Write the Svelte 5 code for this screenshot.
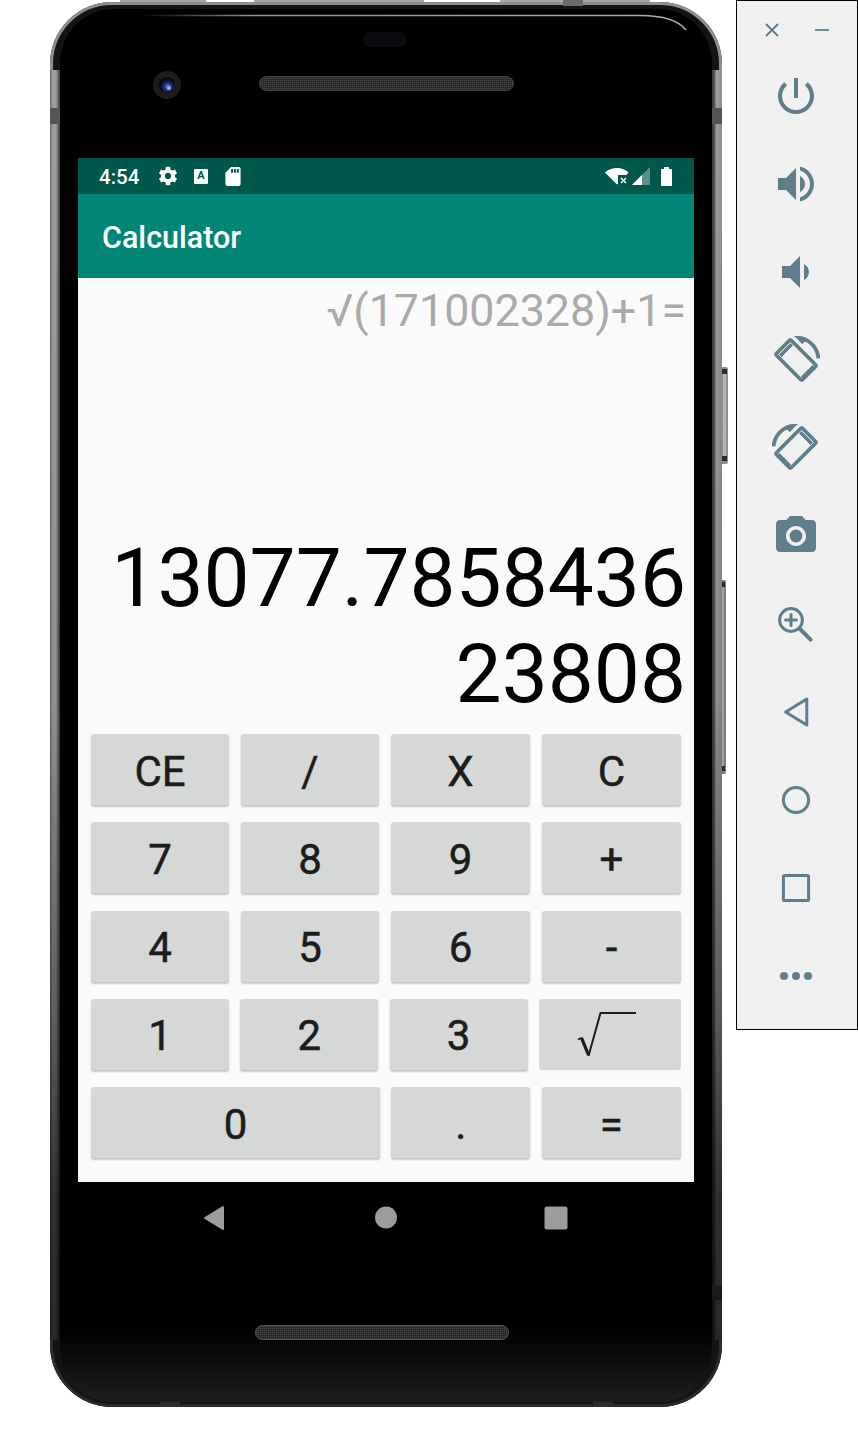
<script>
  const rows = [
    [['CE'], ['/'], ['X'], ['C']],
    [['7'], ['8'], ['9'], ['+']],
    [['4'], ['5'], ['6'], ['-']],
  ];
  const topIcons = [
    'M13 3h-2v10h2V3zm4.83 2.17l-1.42 1.42C17.99 7.86 19 9.81 19 12c0 3.87-3.13 7-7 7s-7-3.13-7-7c0-2.19 1.01-4.14 2.58-5.42L6.17 5.17C4.23 6.82 3 9.26 3 12c0 4.97 4.03 9 9 9s9-4.03 9-9c0-2.74-1.23-5.18-3.17-6.83z',
    'M3 9v6h4l5 5V4L7 9H3zm13.5 3c0-1.77-1.02-3.29-2.5-4.03v8.05c1.48-.73 2.5-2.25 2.5-4.02zM14 3.23v2.06c2.89.86 5 3.54 5 6.71s-2.11 5.85-5 6.71v2.06c4.01-.91 7-4.49 7-8.77s-2.99-7.86-7-8.77z',
    'M18.5 12c0-1.77-1.02-3.29-2.5-4.03v8.05c1.48-.73 2.5-2.25 2.5-4.02zM5 9v6h4l5 5V4L9 9H5z',
  ];
  const rotate = 'M16.48 2.52c3.27 1.55 5.61 4.72 5.97 8.48h1.5C23.44 4.84 18.29 0 12 0l-.66.03 3.81 3.81 1.33-1.32zm-6.25-.77c-.59-.59-1.54-.59-2.12 0L1.75 8.11c-.59.59-.59 1.54 0 2.12l12.02 12.02c.59.59 1.54.59 2.12 0l6.36-6.36c.59-.59.59-1.54 0-2.12L10.23 1.75zm4.6 19.44L2.81 9.17l6.36-6.36 12.02 12.02-6.36 6.36zM9.3 3.7L3.7 9.300l1 1 5.600-5.600zM20.300 14.700l-5.600 5.600 1 1 5.600-5.600z';
</script>

<div class="stage">
  <svg class="device" width="858" height="1440" viewBox="0 0 858 1440" aria-hidden="true">
    <defs>
      <linearGradient id="rim" gradientUnits="userSpaceOnUse" x1="0" y1="0" x2="0" y2="1407">
        <stop offset="0" stop-color="#8f8f8f" />
        <stop offset="0.5" stop-color="#808080" />
        <stop offset="0.72" stop-color="#5a5a5a" />
        <stop offset="0.85" stop-color="#333" />
        <stop offset="1" stop-color="#2a2a2a" />
      </linearGradient>
      <linearGradient id="strip" gradientUnits="userSpaceOnUse" x1="0" y1="0" x2="0" y2="1407">
        <stop offset="0" stop-color="#a0a0a0" />
        <stop offset="0.5" stop-color="#8e8e8e" />
        <stop offset="0.72" stop-color="#5e5e5e" />
        <stop offset="0.85" stop-color="#303030" />
        <stop offset="1" stop-color="#262626" />
      </linearGradient>
      <linearGradient id="shadeL" x1="0" y1="0" x2="1" y2="0">
        <stop offset="0" stop-color="#000" stop-opacity=".35" />
        <stop offset="0.25" stop-color="#000" stop-opacity="0" />
        <stop offset="0.6" stop-color="#000" stop-opacity="0" />
        <stop offset="1" stop-color="#000" stop-opacity=".65" />
      </linearGradient>
      <linearGradient id="shadeR" x1="1" y1="0" x2="0" y2="0">
        <stop offset="0" stop-color="#000" stop-opacity=".1" />
        <stop offset="0.6" stop-color="#000" stop-opacity="0" />
        <stop offset="0.7" stop-color="#000" stop-opacity=".4" />
        <stop offset="1" stop-color="#000" stop-opacity=".65" />
      </linearGradient>
      <linearGradient id="inner" x1="0" y1="0" x2="0" y2="1">
        <stop offset="0" stop-color="#000" />
        <stop offset="0.945" stop-color="#000" />
        <stop offset="1" stop-color="#1e1e1e" />
      </linearGradient>
      <linearGradient id="glint" gradientUnits="userSpaceOnUse" x1="140" y1="0" x2="686" y2="0">
        <stop offset="0" stop-color="#8a9296" stop-opacity="0" />
        <stop offset="0.2" stop-color="#8a9296" />
        <stop offset="1" stop-color="#a8b0b4" />
      </linearGradient>
      <pattern id="mesh" width="2" height="2" patternUnits="userSpaceOnUse">
        <rect width="2" height="2" fill="#2a2a2a" />
        <rect width="1" height="1" fill="#4a4a4a" />
      </pattern>
      <radialGradient id="lens" cx="0.55" cy="0.6" r="0.5">
        <stop offset="0" stop-color="#6a78e0" />
        <stop offset="0.5" stop-color="#1e2a70" />
        <stop offset="1" stop-color="#05060c" />
      </radialGradient>
    </defs>

    <!-- side keys -->
    <rect x="720" y="367" width="8" height="97" rx="2" fill="#8f8f8f" />
    <rect x="723" y="370" width="3" height="90" fill="#b4b4b4" />
    <rect x="722" y="369" width="5" height="5" fill="#2a2a2a" />
    <rect x="722" y="456" width="5" height="5" fill="#2a2a2a" />
    <rect x="719" y="580" width="7" height="194" rx="2" fill="#7c7c7c" />
    <rect x="721" y="584" width="3" height="186" fill="#a0a0a0" />
    <rect x="720" y="582" width="5" height="5" fill="#2a2a2a" />
    <rect x="720" y="766" width="5" height="5" fill="#2a2a2a" />

    <!-- top edge sliver -->
    <rect x="120" y="0" width="86" height="4" fill="#a8a8a8" />
    <rect x="254" y="0" width="170" height="4" fill="#a8a8a8" />
    <rect x="500" y="0" width="150" height="4" fill="#a8a8a8" />

    <!-- body -->
    <rect x="50" y="2" width="672" height="1405" rx="62" fill="#141414" />
    <rect x="51.500" y="3.500" width="669" height="1402" rx="60.500" fill="none" stroke="url(#rim)" stroke-width="3" />
    <rect x="50" y="70" width="10" height="1270" fill="url(#strip)" />
    <rect x="712" y="70" width="10" height="1270" fill="url(#strip)" />
    <rect x="50" y="70" width="10" height="1270" fill="url(#shadeL)" />
    <rect x="712" y="70" width="10" height="1270" fill="url(#shadeR)" />
    <rect x="60" y="9" width="652" height="1393" rx="54" fill="url(#inner)" />
    <rect x="563" y="0" width="20" height="6" fill="#6a6a6a" />
    <rect x="160" y="1402" width="20" height="5" fill="#2e2e2e" />
    <rect x="593" y="1402" width="20" height="5" fill="#2e2e2e" />
    <rect x="50" y="108" width="10" height="16" fill="#555" />
    <rect x="712" y="108" width="10" height="16" fill="#555" />
    <rect x="712" y="1286" width="10" height="14" fill="#1a1a1a" />
    <path d="M140 15.500H640C664 15.500 678 20 686 30" fill="none" stroke="url(#glint)" stroke-width="1.600" />

    <!-- sensor, camera, speakers -->
    <rect x="363" y="32" width="44" height="15" rx="7.500" fill="#0b0c12" />
    <circle cx="167" cy="85" r="14" fill="#1c1c1e" />
    <circle cx="167" cy="85" r="8" fill="url(#lens)" />
    <circle cx="169" cy="88" r="2" fill="#9aa8f5" />
    <rect x="259.500" y="76.500" width="254" height="14" rx="7" fill="url(#mesh)" stroke="#444" />
    <rect x="255.500" y="1325.500" width="253" height="14" rx="7" fill="url(#mesh)" stroke="#555" />

    <!-- navigation bar -->
    <path d="M205 1218L223 1207V1229Z" fill="#9c9c9c" stroke="#9c9c9c" stroke-width="2" stroke-linejoin="round" />
    <circle cx="386" cy="1217.500" r="11" fill="#9c9c9c" />
    <rect x="544.500" y="1206.500" width="23" height="23" rx="2.500" fill="#9c9c9c" />
  </svg>

  <main class="screen">
    <header class="status">
      <span class="time">4:54</span>
      <svg class="gear" width="22" height="22" viewBox="0 0 24 24"><path fill="#fff" d="M19.43 12.98c.04-.32.07-.64.07-.98s-.03-.66-.07-.98l2.11-1.65c.19-.15.24-.42.12-.64l-2-3.46c-.12-.22-.39-.3-.61-.22l-2.49 1c-.52-.4-1.08-.73-1.69-.98l-.38-2.65C14.46 2.18 14.25 2 14 2h-4c-.25 0-.46.18-.49.42l-.38 2.65c-.61.25-1.17.59-1.69.98l-2.49-1c-.23-.09-.49 0-.61.22l-2 3.46c-.13.22-.07.49.12.64l2.11 1.65c-.04.32-.07.65-.07.98s.03.66.07.98l-2.11 1.65c-.19.15-.24.42-.12.64l2 3.46c.12.22.39.3.61.22l2.49-1c.52.4 1.08.73 1.69.98l.38 2.65c.03.24.24.42.49.42h4c.25 0 .46-.18.49-.42l.38-2.65c.61-.25 1.17-.59 1.69-.98l2.49 1c.23.09.49 0 .61-.22l2-3.46c.12-.22.07-.49-.12-.64l-2.11-1.65zM12 15.5c-1.93 0-3.5-1.57-3.5-3.5s1.57-3.5 3.5-3.5 3.5 1.57 3.5 3.5-1.57 3.5-3.5 3.5z" /></svg>
      <span class="keyboard">A</span>
      <svg class="sd" width="16" height="19" viewBox="4 2 16 20"><path fill="#fff" d="M18 2h-8L4 8v12c0 1.1.9 2 2 2h12c1.1 0 2-.9 2-2V4c0-1.1-.9-2-2-2zm-6 6h-2V4h2v4zm3 0h-2V4h2v4zm3 0h-2V4h2v4z" /></svg>
      <span class="spacer"></span>
      <svg class="wifi" width="24" height="18" viewBox="0 0 24 18">
        <path fill="#fff" d="M0 5.500C3 2.500 7.500 1 12 1s8.500 1.500 11.500 4.500L21.500 8H13V16.500L12 17.500Z" />
        <path d="M16 11l5 5M21 11l-5 5" stroke="#fff" stroke-width="1.500" fill="none" />
      </svg>
      <svg class="signal" width="18" height="18" viewBox="0 0 18 18">
        <path fill="#fff" fill-opacity=".35" d="M0 18L18 0V18Z" />
        <path fill="#fff" d="M0 18L10 8V18Z" />
      </svg>
      <svg class="battery" width="11" height="19" viewBox="0 0 11 19"><path fill="#fff" d="M3 0h5v2h2c.6 0 1 .4 1 1v15c0 .6-.4 1-1 1H1c-.6 0-1-.4-1-1V3c0-.6.4-1 1-1h2Z" /></svg>
    </header>
    <div class="appbar">Calculator</div>
    <section class="content">
      <div class="expr">√(171002328)+1=</div>
      <div class="result">13077.785843623808</div>
      <div class="keys">
        {#each rows as row}
          <div class="row">
            {#each row as key}
              <button class="key">{key[0]}</button>
            {/each}
          </div>
        {/each}
        <div class="row row4">
          <button class="key">1</button>
          <button class="key">2</button>
          <button class="key">3</button>
          <button class="key sqrt" aria-label="square root">
            <svg width="60" height="48" viewBox="0 0 60 48">
              <path d="M1 29.500L4.500 27.800" stroke="#1c1c1c" stroke-width="1.600" fill="none" />
              <path d="M4.500 27.800L11.500 45" stroke="#1c1c1c" stroke-width="3.200" fill="none" />
              <path d="M11.500 46L23.500 3H59" stroke="#1c1c1c" stroke-width="2" fill="none" />
            </svg>
          </button>
        </div>
        <div class="row row5">
          <button class="key">0</button>
          <button class="key">.</button>
          <button class="key">=</button>
        </div>
      </div>
    </section>
  </main>

  <aside class="panel">
    <div class="winbar">
      <svg width="16" height="16" viewBox="0 0 16 16"><path d="M2 2l12 12M14 2L2 14" stroke="#607d8b" stroke-width="1.800" fill="none" /></svg>
      <svg width="16" height="16" viewBox="0 0 16 16"><path d="M1 8h14" stroke="#607d8b" stroke-width="1.800" fill="none" /></svg>
    </div>
    <div class="tools">
      {#each topIcons as d}
        <svg width="48" height="48" viewBox="0 0 24 24"><path {d} /></svg>
      {/each}
      <svg class="heavy" width="48" height="48" viewBox="0 0 24 24"><path d={rotate} /></svg>
      <svg class="heavy" width="48" height="48" viewBox="0 0 24 24"><path d={rotate} transform="matrix(-1 0 0 1 24 0)" /></svg>
      <svg width="48" height="48" viewBox="0 0 24 24"><path d="M9 2L7.170 4H4c-1.100 0-2 .9-2 2v12c0 1.100.9 2 2 2h16c1.100 0 2-.9 2-2V6c0-1.100-.9-2-2-2h-3.170L15 2H9zm3 15c-2.760 0-5-2.240-5-5s2.240-5 5-5 5 2.240 5 5-2.240 5-5 5z" /><circle cx="12" cy="12" r="3.200" /></svg>
      <svg class="line" width="48" height="48" viewBox="0 0 24 24"><circle cx="9.500" cy="10" r="5.700" /><path class="thick" d="M14 14.500L19.300 19.800" /><path d="M9.500 7.300v5.400M6.800 10h5.400" /></svg>
      <svg class="line" width="48" height="48" viewBox="0 0 24 24"><path d="M6.800 12L17.400 5.500V18.500Z" /></svg>
      <svg class="line" width="48" height="48" viewBox="0 0 24 24"><circle cx="12" cy="12" r="6.300" /></svg>
      <svg class="line" width="48" height="48" viewBox="0 0 24 24"><rect x="5.700" y="5.700" width="12.600" height="12.600" rx=".7" /></svg>
      <svg width="48" height="48" viewBox="0 0 24 24"><circle cx="6" cy="12" r="2" /><circle cx="12" cy="12" r="2" /><circle cx="18" cy="12" r="2" /></svg>
    </div>
  </aside>
</div>

<style>
  :global(body) { background: #fff; }
  .stage {
    position: relative;
    width: 858px;
    height: 1440px;
    overflow: hidden;
    font-family: Roboto, "Liberation Sans", sans-serif;
  }
  .device { position: absolute; inset: 0; }

  .screen {
    position: absolute;
    left: 78px;
    top: 158px;
    width: 616px;
    height: 1024px;
    display: flex;
    flex-direction: column;
    background: #fafafa;
  }
  .status {
    height: 36px;
    flex: none;
    display: flex;
    align-items: center;
    padding: 0 22px 0 21px;
    background: #00574b;
    color: #fff;
  }
  .time { font-size: 20.500px; font-weight: 500; width: 58px; flex: none; padding-top: 2px; }
  .gear { margin-right: 15px; }
  .keyboard {
    width: 14px;
    height: 15px;
    margin-right: 17px;
    border-radius: 1px;
    background: #fff;
    color: #00574b;
    font-size: 11px;
    font-weight: 700;
    line-height: 13px;
    text-align: center;
  }
  .spacer { flex: 1; }
  .wifi { margin-right: 3px; }
  .signal { margin-right: 11px; }
  .appbar {
    height: 84px;
    flex: none;
    display: flex;
    align-items: center;
    padding: 2px 0 0 24px;
    box-sizing: border-box;
    background: #008577;
    color: #fff;
    font-size: 30.500px;
    font-weight: 500;
  }
  .content { flex: 1; display: flex; flex-direction: column; }
  .expr {
    padding-right: 8px;
    text-align: right;
    color: #aaaaaa;
    font-size: 44.800px;
    line-height: 66px;
  }
  .result {
    margin-top: 186px;
    padding-right: 8px;
    text-align: right;
    color: #000;
    font-size: 82px;
    line-height: 96px;
    word-break: break-all;
  }
  .keys {
    margin-top: 12px;
    padding-left: 13px;
    display: flex;
    flex-direction: column;
    gap: 17.300px;
  }
  .row {
    display: grid;
    grid-template-columns: 138px 138px 139px 139px;
    column-gap: 12px;
    height: 71px;
  }
  .row4 { grid-template-columns: 138px 138px 138px 142px; column-gap: 11.330px; }
  .row5 { grid-template-columns: 289px 139px 139px; column-gap: 11.330px; }
  .key {
    border: 0;
    padding: 3px 0 0;
    border-radius: 3px;
    background: #d6d7d7;
    box-shadow: 0 2px 2px rgba(0, 0, 0, 0.2), 0 0 1px rgba(0, 0, 0, 0.08);
    color: #1c1c1c;
    font: 400 42px Roboto, "Liberation Sans", sans-serif;
    -webkit-text-stroke: 0.5px #1c1c1c;
  }
  .sqrt {
    box-shadow: none;
    display: flex;
    align-items: center;
    justify-content: flex-start;
    padding: 0 0 0 38px;
  }

  .panel {
    position: absolute;
    left: 736px;
    top: 0;
    width: 122px;
    height: 1030px;
    box-sizing: border-box;
    border: 1px solid #000;
    background: #f0f0f0;
    display: flex;
    flex-direction: column;
  }
  .winbar {
    height: 71px;
    padding: 21px 27px 0 27px;
    box-sizing: border-box;
    display: flex;
    justify-content: space-between;
    align-items: flex-start;
  }
  .tools {
    padding-right: 2px;
    display: flex;
    flex-direction: column;
    align-items: center;
    gap: 40px;
  }
  .tools svg { fill: #607d8b; flex: none; }
  .tools svg.heavy path { stroke: #607d8b; stroke-width: 0.45; }
  .tools svg.line { fill: none; stroke: #607d8b; stroke-width: 1.5; stroke-linejoin: round; stroke-linecap: round; }
  .tools svg.line .thick { stroke-width: 2; }
</style>
